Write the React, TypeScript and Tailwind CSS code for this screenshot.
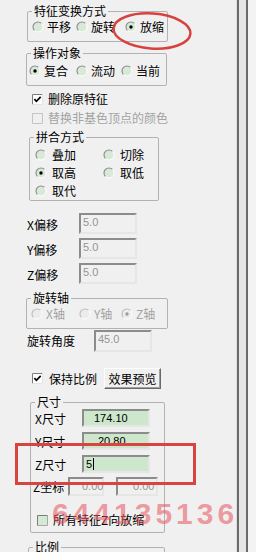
import type { ReactNode } from "react";

const cjk = "font-['Noto_Sans_CJK_SC','Noto_Sans',sans-serif]";
const num = "font-['Liberation_Sans','Noto_Sans_CJK_SC',sans-serif]";

export default function App() {
  return (
    <div className={`relative flex h-[552px] w-[256px] overflow-hidden bg-[#f0f0f0] text-[12px] text-black ${cjk}`}>
      <div className="w-[236px] shrink-0">
        <Group title="特征变换方式" className="ml-[27px] mt-[4px] w-[141px] pb-[7px]">
          <div className="mt-[2px] flex h-[14px] items-center pl-[4px]">
            <RadioItem label="平移" className="w-[44px]" />
            <RadioItem label="旋转" className="w-[49px]" />
            <RadioItem label="放缩" checked />
          </div>
        </Group>

        <Group title="操作对象" className="ml-[26px] mt-[4px] w-[141px] pb-[7px]">
          <div className="mt-[4px] flex h-[14px] items-center pl-[2px]">
            <RadioItem label="复合" checked className="w-[47px]" />
            <RadioItem label="流动" className="w-[45px]" />
            <RadioItem label="当前" />
          </div>
        </Group>

        <CheckItem label="删除原特征" checked className="ml-[32px] mt-[6px]" />
        <CheckItem label="替换非基色顶点的颜色" disabled className="ml-[32px] mt-[5px]" />

        <Group title="拼合方式" className="ml-[29px] mt-[5px] w-[130px]">
          <div className="mt-[2px] grid grid-cols-[68px_auto] pl-[5px]">
            <RadioItem label="叠加" className="h-[18px]" gap="gap-[5px]" />
            <RadioItem label="切除" className="h-[18px]" gap="gap-[5px]" />
            <RadioItem label="取高" checked className="h-[18px]" gap="gap-[5px]" />
            <RadioItem label="取低" className="h-[18px]" gap="gap-[5px]" />
            <RadioItem label="取代" className="h-[18px]" gap="gap-[5px]" />
          </div>
        </Group>

        <FieldRow label="X偏移" value="5.0" className="ml-[27px] mt-[12px]" />
        <FieldRow label="Y偏移" value="5.0" className="ml-[27px] mt-[4px]" />
        <FieldRow label="Z偏移" value="5.0" className="ml-[27px] mt-[4px]" />

        <Group title="旋转轴" className="ml-[26px] mt-[7px] w-[142px] pb-[7px]">
          <div className="mt-[2px] flex h-[14px] items-center pl-[4px]">
            <RadioItem label="X轴" disabled className="w-[48px]" />
            <RadioItem label="Y轴" disabled className="w-[42px]" />
            <RadioItem label="Z轴" disabled checked />
          </div>
        </Group>

        <div className="ml-[27px] mt-[1px] flex items-center">
          <span className="w-[67px]">旋转角度</span>
          <Input value="45.0" className="h-[22px] w-[58px]" />
        </div>

        <div className="ml-[32px] mt-[16px] flex items-center">
          <CheckBox checked />
          <span className="ml-[6px]">保持比例</span>
          <button
            type="button"
            className="ml-[7px] h-[21px] w-[57px] border border-b-[#696969] border-l-white border-r-[#696969] border-t-white bg-[#f0f0f0] leading-[17px] shadow-[inset_-1px_-1px_0_#a0a0a0]"
          >
            效果预览
          </button>
        </div>

        <Group title="尺寸" className="ml-[30px] mt-[6px] w-[135px] pb-[5px]">
          <div className="flex flex-col gap-[5px] pl-[4px]">
            <SizeRow label="X尺寸" value="174.10" pad="pl-[10px]" />
            <SizeRow label="Y尺寸" value="20.80" pad="pl-[14px]" />
            <SizeRow label="Z尺寸" value="5" pad="pl-[2px]" caret />
          </div>
          <div className="mt-[4px] flex items-start pl-[2px]">
            <span className="w-[35px] pt-[3px] leading-[14px]">Z坐标</span>
            <Input value="0.00" className="h-[19px] w-[36px] pl-[12px]" />
            <Input value="0.00" className="ml-[12px] h-[19px] w-[42px] pl-[15px]" />
          </div>
          <CheckItem label="所有特征Z向放缩" green className="ml-[6px] mt-[17px]" />
        </Group>

        <Group title="比例" className="ml-[28px] mt-[7px] w-[137px]">
          <div className="h-[20px]" />
        </Group>
      </div>

      <div className="w-[1px] bg-[#dcdcdc]" />
      <div className="w-[2px] bg-[#6b6b6b]" />
      <div className="w-[7px] bg-[#e6e6e6]" />
      <div className="w-[2px] bg-[#6b6b6b]" />
      <div className="flex-1 bg-[#f3f3f3]" />

      {/* annotation marks drawn over the screenshot */}
      <svg className="absolute left-[110px] top-[8px]" width="86" height="46" viewBox="0 0 86 46">
        <ellipse cx="42" cy="23" rx="38.5" ry="17.5" fill="none" stroke="#d8423e" strokeWidth="2.5" transform="rotate(4 42 23)" />
      </svg>
      <div className="absolute left-[15px] top-[443px] h-[42px] w-[181px] border-[3px] border-[#d8443f]" />
      <div className={`absolute left-[52px] top-[497px] text-[30px] font-bold leading-[34px] tracking-[4px] text-[#e8505a]/55 ${num}`}>
        644135136
      </div>
    </div>
  );
}

function Group({ title, className, children }: { title: string; className?: string; children: ReactNode }) {
  return (
    <fieldset className={`rounded-[2px] border border-[#b2b2b2] ${className ?? ""}`}>
      <legend className="ml-[4px] px-[2px] leading-[14px]">{title}</legend>
      {children}
    </fieldset>
  );
}

function Radio({ checked, disabled }: { checked?: boolean; disabled?: boolean }) {
  return (
    <svg width="12" height="12" viewBox="0 0 12 12" className="shrink-0">
      <circle cx="6" cy="6" r="5" fill={disabled ? "#ececec" : "#d8ead7"} />
      <path d="M2.46 9.54 A5 5 0 0 1 9.54 2.46" fill="none" stroke={disabled ? "#bcbcbc" : "#8a8a8a"} strokeWidth="1.1" />
      <path d="M9.54 2.46 A5 5 0 0 1 2.46 9.54" fill="none" stroke="#ffffff" strokeWidth="1" />
      {checked && <circle cx="6" cy="6" r="1.7" fill={disabled ? "#9c9c9c" : "#000000"} />}
    </svg>
  );
}

function RadioItem({
  label,
  checked,
  disabled,
  className,
  gap = "gap-[3px]",
}: {
  label: string;
  checked?: boolean;
  disabled?: boolean;
  className?: string;
  gap?: string;
}) {
  return (
    <div className={`flex items-center ${gap} ${className ?? ""}`}>
      <Radio checked={checked} disabled={disabled} />
      <span className={`leading-[14px] ${disabled ? "text-[#a3a3a3]" : ""}`}>{label}</span>
    </div>
  );
}

function CheckBox({ checked, disabled, green }: { checked?: boolean; disabled?: boolean; green?: boolean }) {
  const fill = green ? "#d3e9d2" : disabled ? "#f0f0f0" : "#ffffff";
  const dark = disabled ? "#c4c4c4" : "#7c7c7c";
  const light = disabled ? "#c4c4c4" : green ? "#a8a8a8" : "#e4e4e4";
  return (
    <svg width="11" height="11" viewBox="0 0 11 11" className="shrink-0">
      <rect x="0" y="0" width="11" height="11" fill={fill} />
      <path d="M0.5 10.5 V0.5 H10.5" fill="none" stroke={dark} strokeWidth="1" />
      <path d="M10.5 0.5 V10.5 H0.5" fill="none" stroke={light} strokeWidth="1" />
      {checked && <path d="M2.4 5.2 L4.4 7.3 L8.7 2.9" fill="none" stroke="#000000" strokeWidth="1.7" />}
    </svg>
  );
}

function CheckItem({
  label,
  checked,
  disabled,
  green,
  className,
}: {
  label: string;
  checked?: boolean;
  disabled?: boolean;
  green?: boolean;
  className?: string;
}) {
  return (
    <div className={`flex h-[14px] items-center gap-[5px] ${className ?? ""}`}>
      <CheckBox checked={checked} disabled={disabled} green={green} />
      <span className={`leading-[14px] ${disabled ? "text-[#a3a3a3]" : ""}`}>{label}</span>
    </div>
  );
}

function Input({ value, className, green, caret }: { value: string; className?: string; green?: boolean; caret?: boolean }) {
  return (
    <div
      className={`flex items-start border-2 border-b-[#e6e6e6] border-l-[#8c8c8c] border-r-[#e6e6e6] border-t-[#8c8c8c] pl-[2px] text-[11px] leading-[15px] ${num} ${
        green ? "bg-[#cce7cb] text-black" : "bg-[#f0f0f0] text-[#959595]"
      } ${className ?? ""}`}
    >
      {value}
      {caret && <span className="ml-[1px] mt-[1px] h-[12px] w-[1px] bg-black" />}
    </div>
  );
}

function FieldRow({ label, value, className }: { label: string; value: string; className?: string }) {
  return (
    <div className={`flex items-center ${className ?? ""}`}>
      <span className="w-[52px] pt-[2px]">{label}</span>
      <Input value={value} className="h-[21px] w-[58px]" />
    </div>
  );
}

function SizeRow({ label, value, pad, caret }: { label: string; value: string; pad: string; caret?: boolean }) {
  return (
    <div className="flex h-[18px] items-center">
      <span className="w-[47px] pt-[2px] leading-[14px]">{label}</span>
      <Input value={value} green caret={caret} className={`h-[18px] w-[68px] ${pad}`} />
    </div>
  );
}
